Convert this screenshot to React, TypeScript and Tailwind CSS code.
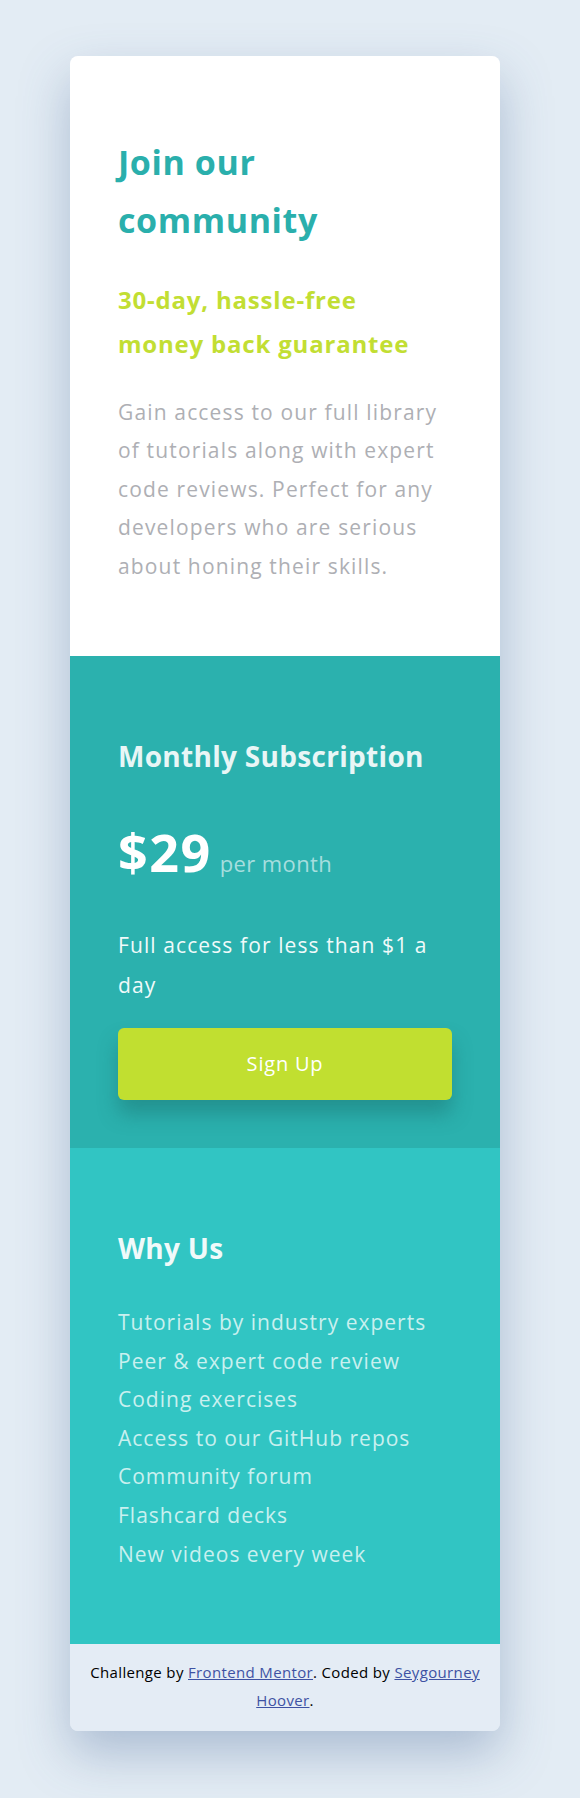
import React from "react";

const perks = [
  "Tutorials by industry experts",
  "Peer & expert code review",
  "Coding exercises",
  "Access to our GitHub repos",
  "Community forum",
  "Flashcard decks",
  "New videos every week",
];

const App = () => {
  return (
    <div className="min-h-screen w-full bg-[#e3ecf4] pt-[56px] pb-[67px] font-['Open_Sans',sans-serif]">
      <div className="ml-[70px] w-[430px] overflow-hidden rounded-lg shadow-[0_22px_50px_rgba(70,100,150,0.35)]">
        {/* intro */}
        <section className="bg-white px-12 pt-[77px] pb-[71px]">
          <h1 className="text-[34px] font-bold leading-[58px] tracking-[0.6px] text-[#2aafac]">
            Join our community
          </h1>
          <h2 className="mt-[29px] text-[24px] font-bold leading-[44px] tracking-[0.8px] text-[#c2de33]">
            30-day, hassle-free
            <br />
            money back guarantee
          </h2>
          <p className="mt-[27px] text-[21px] leading-[38.4px] tracking-[1.15px] text-[#aeafb4]">
            Gain access to our full library of tutorials along with expert code
            reviews. Perfect for any developers who are serious about honing
            their skills.
          </p>
        </section>

        {/* pricing */}
        <section className="bg-[#2bb1ae] px-12 pt-[82px] pb-[48px]">
          <h3 className="text-[28px] font-bold leading-[36px] tracking-[0.3px] text-[#e8f6f6]">
            Monthly Subscription
          </h3>
          <div className="mt-[52px] flex items-baseline gap-2">
            <span className="text-[52px] font-bold leading-[52px] tracking-[1.5px] text-white">
              $29
            </span>
            <span className="text-[22px] leading-none tracking-[0.4px] text-[#a6dede]">
              per month
            </span>
          </div>
          <p className="mt-[47px] text-[21px] leading-[40px] tracking-[1.1px] text-[#f0fafa]">
            Full access for less than $1 a day
          </p>
          <button className="mt-[23px] h-[72px] w-full rounded-md bg-[#c1df30] text-[20px] tracking-[0.8px] text-white shadow-[0_14px_20px_rgba(20,90,90,0.35)]">
            Sign Up
          </button>
        </section>

        {/* why us */}
        <section className="bg-[#31c5c3] px-12 pt-[82px] pb-[71px]">
          <h3 className="text-[28px] font-bold leading-[36px] tracking-[0.3px] text-[#f0fafa]">
            Why Us
          </h3>
          <ul className="mt-[37px]">
            {perks.map((p) => (
              <li key={p} className="text-[21px] leading-[38.6px] tracking-[1px] text-[#c9f0ef]">
                {p}
              </li>
            ))}
          </ul>
        </section>

        <footer className="bg-[#e4ecf5] px-5 pt-[14px] pb-[17px] text-center text-[15px] leading-[28px] tracking-[0.35px] text-black">
          Challenge by{" "}
          <a href="#" className="text-[#3e52a3] underline">
            Frontend Mentor
          </a>
          . Coded by{" "}
          <a href="#" className="text-[#3e52a3] underline">
            Seygourney Hoover
          </a>
          .
        </footer>
      </div>
    </div>
  );
};

export default App;
